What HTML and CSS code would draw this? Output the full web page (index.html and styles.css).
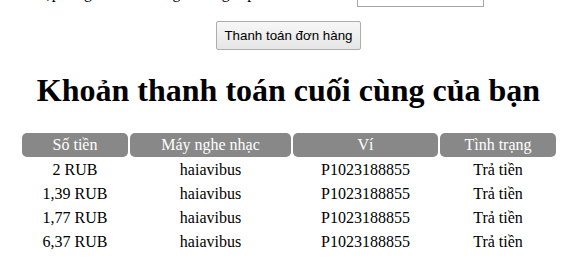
FILE: index.html
```html
<!DOCTYPE html>
<html lang="vi">
<head>
  <meta charset="UTF-8">
  <title>Thanh toán</title>
  <link rel="stylesheet" href="styles.css">
</head>
<body>
  <div class="page">
    <div class="amount-row">
      <label class="amount-label" for="amount">Nhập tổng thanh toán [giá trong rúp]:</label>
      <input class="amount-input" id="amount" type="text">
    </div>
    <div class="pay-row">
      <button class="pay-button">Thanh toán đơn hàng</button>
    </div>
    <h1 class="title">Khoản thanh toán cuối cùng của bạn</h1>
  </div>
  <table class="payments">
    <thead>
      <tr>
        <th class="col-sum">Số tiền</th>
        <th class="col-player">Máy nghe nhạc</th>
        <th class="col-wallet">Ví</th>
        <th class="col-status">Tình trạng</th>
      </tr>
    </thead>
    <tbody>
      <tr><td>2 RUB</td><td>haiavibus</td><td>P1023188855</td><td>Trả tiền</td></tr>
      <tr><td>1,39 RUB</td><td>haiavibus</td><td>P1023188855</td><td>Trả tiền</td></tr>
      <tr><td>1,77 RUB</td><td>haiavibus</td><td>P1023188855</td><td>Trả tiền</td></tr>
      <tr><td>6,37 RUB</td><td>haiavibus</td><td>P1023188855</td><td>Trả tiền</td></tr>
    </tbody>
  </table>
</body>
</html>
```
FILE: styles.css
```css
html {
  overflow: hidden;
}

body {
  margin: 0 8px 8px;
  padding-top: 1px;
  font-family: "Liberation Serif", "Times New Roman", serif;
  font-size: 16px;
  color: #000;
}

.page {
  padding-left: 10px;
}

/* the form above is scrolled mostly out of view */
.amount-row {
  display: flex;
  align-items: flex-start;
  margin-top: -15px;
  padding-left: 7px;
}

.amount-label {
  flex: 0 0 332px;
  margin-top: -2px;
}

.amount-input {
  width: 127px;
  height: 21px;
  box-sizing: border-box;
  border: 1px solid #a5a5a5;
  background: #fff;
  font-family: "Liberation Sans", Arial, sans-serif;
  font-size: 13.33px;
}

.pay-row {
  display: flex;
  justify-content: center;
  margin-top: 14px;
}

.pay-button {
  height: 29px;
  padding: 0 7px;
  font-family: "Liberation Sans", Arial, sans-serif;
  font-size: 13.33px;
  color: #000;
  background: linear-gradient(#f7f7f7, #e6e6e6);
  border: 1px solid #adadad;
  border-radius: 2px;
}

.title {
  margin: 22px 0 22px;
  text-align: center;
  font-size: 32px;
  font-weight: bold;
}

.payments {
  width: 538px;
  margin-left: 12px;
  border-spacing: 2px;
}

.payments th {
  height: 24px;
  padding: 0;
  font-weight: normal;
  color: #fff;
  background-color: #888888;
  border-radius: 5px;
}

.payments td {
  padding: 1px 0;
  line-height: 20px;
  text-align: center;
}

.col-sum {
  width: 106px;
}

.col-player {
  width: 161px;
}

.col-wallet {
  width: 145px;
}

.col-status {
  width: 116px;
}
```
